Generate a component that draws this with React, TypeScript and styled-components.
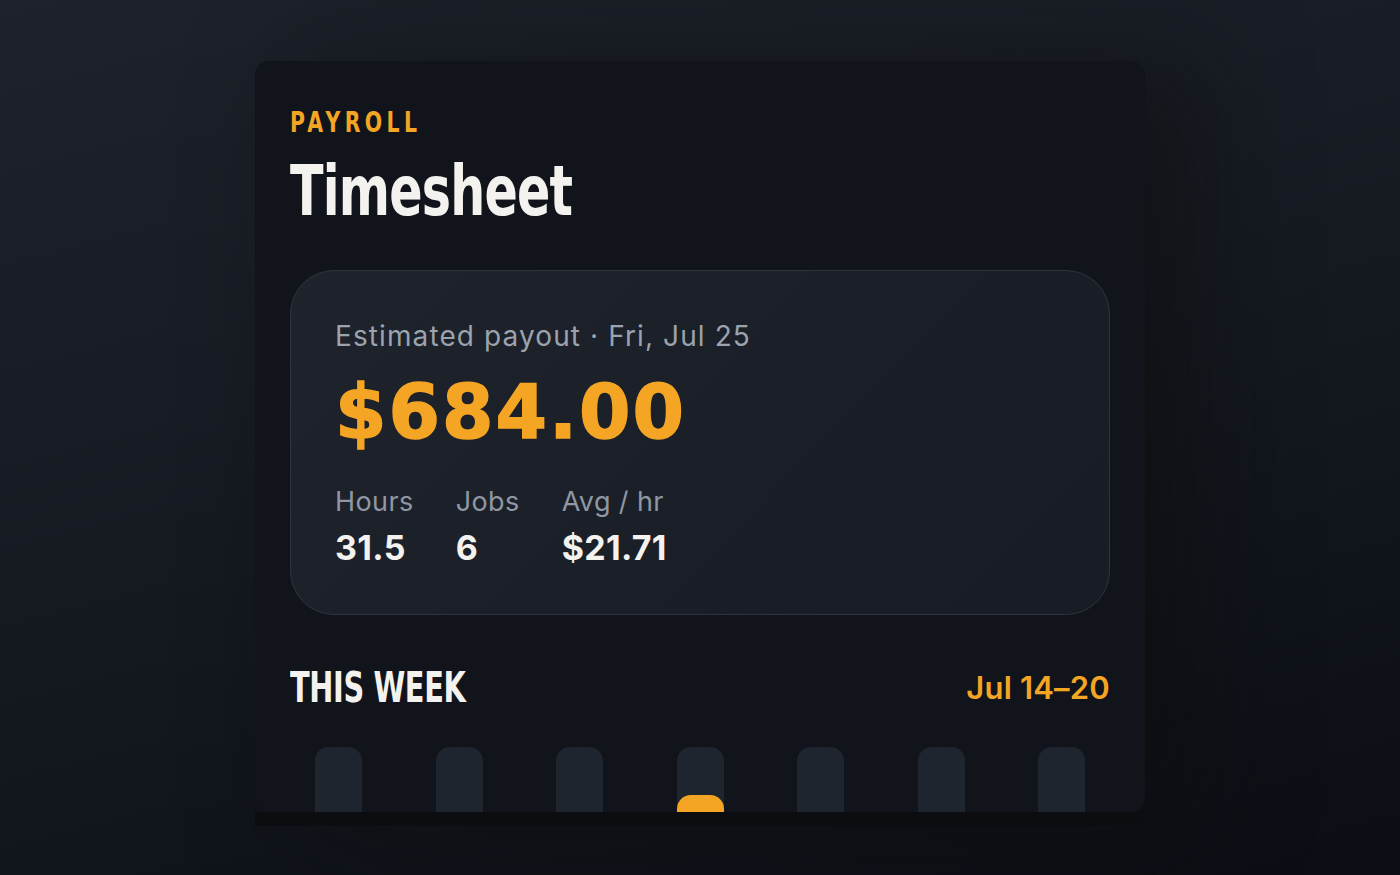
import React from 'react';
import { styled, createGlobalStyle } from 'styled-components';

const GlobalStyle = createGlobalStyle`
  html, body {
    margin: 0;
    padding: 0;
    height: 100%;
  }
  body {
    background: linear-gradient(165deg, #1d222b 0%, #181c24 35%, #12161d 65%, #0b0e14 100%);
    font-family: Inter, 'Noto Sans', sans-serif;
  }
`;

const amber = '#f5a524';

/* headings: condensed bold face, squeezed further to match the display font */
const Condensed = styled.div<{ $squeeze: number }>`
  margin: 0;
  font-family: 'DejaVu Sans Condensed', 'DejaVu Sans', sans-serif;
  font-weight: 700;
  line-height: 1;
  transform: scaleX(${(p) => p.$squeeze});
  transform-origin: left center;
  white-space: nowrap;
`;

const Page = styled.div`
  min-height: 875px;
  display: flex;
  justify-content: center;
  padding-top: 61px;
  box-sizing: border-box;
`;

const Frame = styled.div`
  width: 890px;
  display: flex;
  flex-direction: column;
`;

const Card = styled.div`
  height: 751px;
  overflow: hidden;
  box-sizing: border-box;
  padding: 48px 35px 0;
  background: #11151b;
  border-radius: 14px;
  box-shadow: 50px 10px 110px rgba(12, 12, 12, 0.55);
`;

const Strip = styled.div`
  height: 14px;
  background: #0b0d10;
`;

const Eyebrow = styled(Condensed)`
  font-size: 28px;
  letter-spacing: 5.5px;
  color: ${amber};
`;

const Title = styled(Condensed)`
  margin-top: 19px;
  font-size: 70px;
  letter-spacing: -1px;
  color: #f3f2ee;
`;

const Panel = styled.section`
  margin-top: 44px;
  height: 345px;
  box-sizing: border-box;
  padding: 49px 44px 0;
  border-radius: 44px;
  border: 1px solid #2e343e;
  background: linear-gradient(135deg, #1e232c 0%, #1a1f27 60%, #181c24 100%);
`;

const PayoutLabel = styled.div`
  font-size: 28px;
  line-height: 1.2;
  color: #9aa3ae;
  letter-spacing: 1.1px;
`;

const Amount = styled.div`
  margin-top: 21px;
  font-family: 'DejaVu Sans', sans-serif;
  font-weight: 700;
  font-size: 74px;
  line-height: 1;
  letter-spacing: 2px;
  color: ${amber};
  -webkit-text-stroke: 1.5px ${amber};
`;

const Stats = styled.div`
  margin-top: 37px;
  display: flex;
  gap: 42px;
`;

const Stat = styled.div`
  display: flex;
  flex-direction: column;
  gap: 10px;
`;

const StatLabel = styled.div`
  font-size: 27px;
  line-height: 1.2;
  letter-spacing: 0.4px;
  color: #8e97a3;
`;

const StatValue = styled.div`
  font-size: 34px;
  font-weight: 700;
  line-height: 1.2;
  letter-spacing: 0.3px;
  color: #f3f2ee;
`;

const WeekHeader = styled.div`
  margin-top: 51px;
  display: flex;
  align-items: center;
  justify-content: space-between;
`;

const WeekTitle = styled(Condensed)`
  font-size: 43px;
  letter-spacing: -0.5px;
  color: #f3f2ee;
`;

const WeekRange = styled.div`
  font-size: 31px;
  font-weight: 600;
  color: ${amber};
  letter-spacing: 0.2px;
`;

const Bars = styled.div`
  margin-top: 38px;
  display: grid;
  grid-template-columns: repeat(7, 97px);
  justify-content: space-between;
`;

const Column = styled.div`
  display: flex;
  justify-content: center;
`;

const Track = styled.div`
  width: 47px;
  height: 110px;
  border-radius: 14px;
  background: #1f252e;
  overflow: hidden;
  display: flex;
  align-items: flex-end;
`;

const Fill = styled.div`
  width: 100%;
  border-radius: 14px 14px 0 0;
  background: ${amber};
`;

const days = [0, 0, 0, 62, 0, 0, 0];

export default function App() {
  return (
    <>
      <GlobalStyle />
      <Page>
        <Frame>
          <Card>
            <Eyebrow $squeeze={0.81}>PAYROLL</Eyebrow>
            <Title as="h1" $squeeze={0.78}>Timesheet</Title>
            <Panel>
              <PayoutLabel>Estimated payout · Fri, Jul 25</PayoutLabel>
              <Amount>$684.00</Amount>
              <Stats>
                <Stat>
                  <StatLabel>Hours</StatLabel>
                  <StatValue>31.5</StatValue>
                </Stat>
                <Stat>
                  <StatLabel>Jobs</StatLabel>
                  <StatValue>6</StatValue>
                </Stat>
                <Stat>
                  <StatLabel>Avg / hr</StatLabel>
                  <StatValue>$21.71</StatValue>
                </Stat>
              </Stats>
            </Panel>
            <WeekHeader>
              <WeekTitle as="h2" $squeeze={0.745}>THIS WEEK</WeekTitle>
              <WeekRange>Jul 14–20</WeekRange>
            </WeekHeader>
            <Bars>
              {days.map((h, i) => (
                <Column key={i}>
                  <Track>{h > 0 && <Fill style={{ height: h }} />}</Track>
                </Column>
              ))}
            </Bars>
          </Card>
          <Strip />
        </Frame>
      </Page>
    </>
  );
}
